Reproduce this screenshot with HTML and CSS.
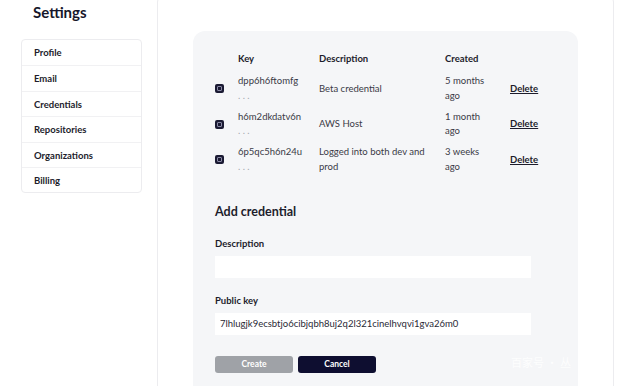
FILE: index.html
```html
<!DOCTYPE html>
<html lang="en">
<head>
    <meta charset="UTF-8">
    <meta name="viewport" content="width=device-width, initial-scale=1.0">
    <title>Settings - Credentials</title>
    <link rel="stylesheet" href="styles.css">
</head>
<body>
    <div class="page">
        <aside class="sidebar">
            <h1 class="title">Settings</h1>
            <nav class="menu">
                <a class="menu-item" href="#">Profile</a>
                <a class="menu-item" href="#">Email</a>
                <a class="menu-item" href="#">Credentials</a>
                <a class="menu-item" href="#">Repositories</a>
                <a class="menu-item" href="#">Organizations</a>
                <a class="menu-item" href="#">Billing</a>
            </nav>
        </aside>

        <main class="card">
            <div class="panel">
                <div class="cred-table">
                    <div class="row head">
                        <span></span>
                        <span>Key</span>
                        <span>Description</span>
                        <span>Created</span>
                        <span></span>
                    </div>
                    <div class="row">
                        <span class="check"></span>
                        <span class="key">dpp6h6ftomfg<br><span class="dots">. . .</span></span>
                        <span>Beta credential</span>
                        <span>5 months<br>ago</span>
                        <a class="delete" href="#">Delete</a>
                    </div>
                    <div class="row">
                        <span class="check"></span>
                        <span class="key">h6m2dkdatv6n<br><span class="dots">. . .</span></span>
                        <span>AWS Host</span>
                        <span>1 month<br>ago</span>
                        <a class="delete" href="#">Delete</a>
                    </div>
                    <div class="row">
                        <span class="check"></span>
                        <span class="key">6p5qc5h6n24u<br><span class="dots">. . .</span></span>
                        <span>Logged into both dev and prod</span>
                        <span>3 weeks<br>ago</span>
                        <a class="delete" href="#">Delete</a>
                    </div>
                </div>

                <form class="add-form">
                    <h2>Add credential</h2>
                    <label class="field">
                        <span class="label">Description</span>
                        <input class="input" type="text" value="">
                    </label>
                    <label class="field">
                        <span class="label">Public key</span>
                        <input class="input" type="text" value="7lhlugjk9ecsbtjo6cibjqbh8uj2q2l321cinelhvqvi1gva26m0">
                    </label>
                    <div class="actions">
                        <button class="btn btn-create" type="button">Create</button>
                        <button class="btn btn-cancel" type="button">Cancel</button>
                    </div>
                </form>
                <div class="watermark">百家号 · 丛</div>
            </div>
        </main>
    </div>
</body>
</html>
```

FILE: styles.css
```css
* {
    margin: 0;
    padding: 0;
    box-sizing: border-box;
}

body {
    font-family: Lato, "Noto Sans", Arial, sans-serif;
    background: #ffffff;
    color: #1c1c2b;
    overflow: hidden;
}

.page {
    display: flex;
    align-items: flex-start;
    height: 386px;
}

.sidebar {
    width: 121px;
    margin-left: 21px;
    flex-shrink: 0;
}

.title {
    font-size: 15px;
    font-weight: 700;
    line-height: 18px;
    margin: 3px 0 0 12px;
    color: #16162a;
}

.menu {
    margin-top: 18px;
    border: 1px solid #ececef;
    border-radius: 4px;
    display: flex;
    flex-direction: column;
}

.menu-item {
    display: block;
    height: 25.4px;
    line-height: 25px;
    padding-left: 12px;
    font-size: 9.5px;
    font-weight: 700;
    color: #1d1d2c;
    text-decoration: none;
    border-top: 1px solid #f1f1f3;
}

.menu-item:first-child {
    border-top: none;
}

.card {
    margin-left: 15px;
    margin-top: -10px;
    width: 457px;
    height: 410px;
    border: 1px solid #ececef;
    border-radius: 12px;
    padding: 40px 0 0 35px;
    flex-shrink: 0;
}

.panel {
    position: relative;
    width: 385px;
    height: 380px;
    background: #f5f6f8;
    border-radius: 12px;
    padding: 17px 0 0 22px;
}

.cred-table {
    font-size: 9.5px;
    color: #3a3a46;
}

.row {
    display: grid;
    grid-template-columns: 23px 81px 126px 65px auto;
    align-items: center;
    height: 35.5px;
    line-height: 14.5px;
}

.row.head {
    height: 23px;
    font-weight: 700;
    color: #1d1d2c;
}

.check {
    width: 9px;
    height: 9px;
    border-radius: 2px;
    background: #1a1a33;
    position: relative;
}

.check::after {
    content: "";
    position: absolute;
    left: 2px;
    top: 2px;
    width: 5px;
    height: 5px;
    border-radius: 1px;
    border: 1px solid #8a8aa6;
    box-sizing: border-box;
}

.dots {
    color: #a3a5ad;
}

.delete {
    font-weight: 700;
    color: #1d1d2c;
    text-decoration: underline;
}

.add-form {
    margin-top: 26px;
}

.add-form h2 {
    font-size: 12.5px;
    font-weight: 700;
    color: #1d1d2c;
    line-height: 16px;
}

.field {
    display: block;
    margin-top: 18px;
}

.label {
    display: block;
    font-size: 9.5px;
    font-weight: 700;
    color: #1d1d2c;
    line-height: 12px;
    margin-bottom: 6px;
}

.input {
    display: block;
    width: 316px;
    height: 22px;
    border: none;
    background: #ffffff;
    padding: 0 5px;
    font-family: inherit;
    font-size: 9.5px;
    color: #2a2a36;
    outline: none;
}

.field + .field {
    margin-top: 17px;
}

.actions {
    display: flex;
    gap: 5px;
    margin-top: 21px;
}

.btn {
    width: 78px;
    height: 17px;
    border: none;
    border-radius: 3px;
    font-family: inherit;
    font-size: 8.5px;
    font-weight: 700;
    color: #ffffff;
}

.btn-create {
    background: #9fa2a7;
}

.btn-cancel {
    background: #0e0e30;
}

.watermark {
    position: absolute;
    left: 318px;
    top: 323px;
    font-size: 11px;
    color: rgba(255, 255, 255, 0.85);
    font-family: "Noto Sans CJK SC", sans-serif;
}
```
